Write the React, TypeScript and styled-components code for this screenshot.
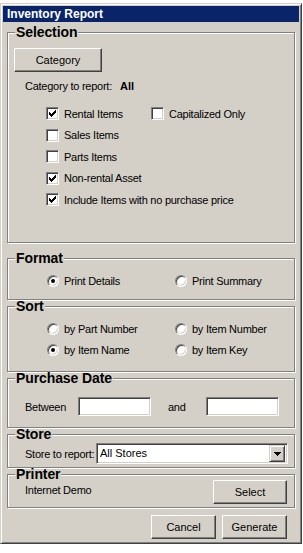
import React from "react";
import styled, { createGlobalStyle } from "styled-components";

const GlobalStyle = createGlobalStyle`
  html, body {
    margin: 0;
    padding: 0;
    background: #ffffff;
  }
  * {
    box-sizing: border-box;
  }
`;

const Window = styled.div`
  width: 302px;
  height: 541px;
  margin-top: 3px;
  border: 1px solid;
  border-color: #d4d0c8 #404040 #404040 #d4d0c8;
  box-shadow: inset 1px 1px #ffffff, inset -1px -1px #808080;
  padding: 2px;
  background: #d4d0c8;
  display: flex;
  flex-direction: column;
  font-family: "Liberation Sans", Arial, sans-serif;
  color: #000000;
`;

const TitleBar = styled.div`
  height: 16px;
  line-height: 16px;
  padding-left: 4px;
  background: #0a246a;
  color: #ffffff;
  font-size: 12px;
  font-weight: bold;
`;

const Body = styled.div`
  padding: 0 4px;
  display: flex;
  flex-direction: column;
`;

interface GroupProps {
  $height: number;
  $top: number;
}
const Group = styled.fieldset<GroupProps>`
  height: ${(p) => p.$height}px;
  margin: ${(p) => p.$top}px 0 0 0;
  padding: 0;
  min-width: 0;
  border: 1px solid #808080;
  box-shadow: inset 1px 1px #ffffff, 1px 1px #ffffff;
`;

const Legend = styled.legend`
  margin-left: 7px;
  padding: 0 1px;
  font-size: 14px;
  font-weight: bold;
  line-height: 10px;
  letter-spacing: -0.1px;
  background: #d4d0c8;
`;

const Label = styled.span`
  font-size: 11px;
  letter-spacing: -0.25px;
  white-space: nowrap;
`;

interface ButtonProps {
  $w: number;
}
const Button = styled.button<ButtonProps>`
  width: ${(p) => p.$w}px;
  height: 24px;
  padding: 0;
  background: #d4d0c8;
  border: 1px solid;
  border-color: #ffffff #404040 #404040 #ffffff;
  box-shadow: inset -1px -1px #808080;
  font-family: "Liberation Sans", Arial, sans-serif;
  font-size: 11px;
  color: #000000;
`;

const CategoryButton = styled(Button)`
  margin: 11px 0 0 6px;
`;

const CategoryLine = styled.div`
  margin: 7px 0 0 17px;
  height: 14px;
  line-height: 14px;
  display: flex;
`;

const CategoryLabel = styled(Label)`
  width: 95px;
`;

const CategoryValue = styled.span`
  font-size: 11px;
  font-weight: bold;
`;

const CheckGrid = styled.div`
  margin-top: 14px;
  padding-left: 38px;
  display: grid;
  grid-template-columns: 105px auto;
  grid-auto-rows: 13px;
  row-gap: 8.5px;
`;

interface OptionProps {
  $wide?: boolean;
}
const Option = styled.div<OptionProps>`
  display: flex;
  align-items: center;
  gap: 5px;
  height: 13px;
  grid-column: ${(p) => (p.$wide ? "1 / span 2" : "auto")};
`;

const CheckBoxBox = styled.span`
  width: 13px;
  height: 13px;
  flex: none;
  background: #ffffff;
  border: 1px solid;
  border-color: #808080 #ffffff #ffffff #808080;
  box-shadow: inset 1px 1px #404040, inset -1px -1px #d4d0c8;
  display: flex;
  align-items: center;
  justify-content: center;
`;

const CheckBox = ({ checked }: { checked?: boolean }) => (
  <CheckBoxBox>
    {checked && (
      <svg width="7" height="7" viewBox="0 0 7 7" shapeRendering="crispEdges">
        <path
          d="M6 0h1v3h-1v1h-1v1h-1v1h-1v1h-1v-1h-1v-1h-1v-3h1v1h1v1h1v-1h1v-1h1z"
          fill="#000000"
        />
      </svg>
    )}
  </CheckBoxBox>
);

const RadioRing = styled.span`
  width: 12px;
  height: 12px;
  flex: none;
  border-radius: 50%;
  background: #ffffff;
  border: 1px solid;
  border-color: #808080 #ffffff #ffffff #808080;
  box-shadow: inset 1px 1px #404040, inset -1px -1px #d4d0c8;
  display: flex;
  align-items: center;
  justify-content: center;
`;

const RadioDot = styled.span`
  width: 4px;
  height: 4px;
  border-radius: 50%;
  background: #000000;
`;

const Radio = ({ checked }: { checked?: boolean }) => (
  <RadioRing>{checked && <RadioDot />}</RadioRing>
);

interface RadioGridProps {
  $top: number;
}
const RadioGrid = styled.div<RadioGridProps>`
  margin-top: ${(p) => p.$top}px;
  padding-left: 39px;
  display: grid;
  grid-template-columns: 128px auto;
  grid-auto-rows: 14px;
  row-gap: 7px;
  align-items: center;
`;

const RadioOption = styled.div`
  display: flex;
  align-items: center;
  gap: 5px;
`;

const DateRow = styled.div`
  margin: 14px 0 0 17px;
  display: flex;
  align-items: center;
`;

interface FieldLabelProps {
  $w: number;
}
const FieldLabel = styled(Label)<FieldLabelProps>`
  display: inline-block;
  width: ${(p) => p.$w}px;
`;

const TextBox = styled.div`
  width: 73px;
  height: 19px;
  background: #ffffff;
  border: 1px solid;
  border-color: #808080 #ffffff #ffffff #808080;
  box-shadow: inset 1px 1px #404040, inset -1px -1px #d4d0c8;
`;

const StoreRow = styled.div`
  margin: 4px 0 0 17px;
  display: flex;
  align-items: center;
`;

const Combo = styled.div`
  width: 192px;
  height: 21px;
  background: #ffffff;
  border: 1px solid;
  border-color: #808080 #ffffff #ffffff #808080;
  box-shadow: inset 1px 1px #404040, inset -1px -1px #d4d0c8;
  padding: 2px;
  display: flex;
  align-items: center;
`;

const ComboText = styled.span`
  flex: 1;
  padding-left: 1px;
  font-size: 11px;
  line-height: 15px;
`;

const ComboArrow = styled.span`
  width: 16px;
  height: 17px;
  flex: none;
  background: #d4d0c8;
  border: 1px solid;
  border-color: #d4d0c8 #404040 #404040 #d4d0c8;
  box-shadow: inset 1px 1px #ffffff, inset -1px -1px #808080;
  display: flex;
  align-items: center;
  justify-content: center;
`;

const PrinterRow = styled.div`
  margin-top: 1px;
  padding: 0 7px 0 17px;
  display: flex;
  align-items: flex-start;
  justify-content: space-between;
`;

const PrinterName = styled(Label)`
  margin-top: 4px;
`;

const Footer = styled.div`
  margin-top: 7px;
  padding-right: 8px;
  display: flex;
  justify-content: flex-end;
  gap: 6px;
`;

export default function App() {
  return (
    <>
      <GlobalStyle />
      <Window>
        <TitleBar>Inventory Report</TitleBar>
        <Body>
          <Group $height={216} $top={5}>
            <Legend>Selection</Legend>
            <CategoryButton $w={88}>Category</CategoryButton>
            <CategoryLine>
              <CategoryLabel>Category to report:</CategoryLabel>
              <CategoryValue>All</CategoryValue>
            </CategoryLine>
            <CheckGrid>
              <Option>
                <CheckBox checked />
                <Label>Rental Items</Label>
              </Option>
              <Option>
                <CheckBox />
                <Label>Capitalized Only</Label>
              </Option>
              <Option $wide>
                <CheckBox />
                <Label>Sales Items</Label>
              </Option>
              <Option $wide>
                <CheckBox />
                <Label>Parts Items</Label>
              </Option>
              <Option $wide>
                <CheckBox checked />
                <Label>Non-rental Asset</Label>
              </Option>
              <Option $wide>
                <CheckBox checked />
                <Label>Include Items with no purchase price</Label>
              </Option>
            </CheckGrid>
          </Group>

          <Group $height={47} $top={10}>
            <Legend>Format</Legend>
            <RadioGrid $top={11}>
              <RadioOption>
                <Radio checked />
                <Label>Print Details</Label>
              </RadioOption>
              <RadioOption>
                <Radio />
                <Label>Print Summary</Label>
              </RadioOption>
            </RadioGrid>
          </Group>

          <Group $height={71} $top={1}>
            <Legend>Sort</Legend>
            <RadioGrid $top={11}>
              <RadioOption>
                <Radio />
                <Label>by Part Number</Label>
              </RadioOption>
              <RadioOption>
                <Radio />
                <Label>by Item Number</Label>
              </RadioOption>
              <RadioOption>
                <Radio checked />
                <Label>by Item Name</Label>
              </RadioOption>
              <RadioOption>
                <Radio />
                <Label>by Item Key</Label>
              </RadioOption>
            </RadioGrid>
          </Group>

          <Group $height={55} $top={1}>
            <Legend>Purchase Date</Legend>
            <DateRow>
              <FieldLabel $w={53}>Between</FieldLabel>
              <TextBox />
              <FieldLabel $w={17} />
              <FieldLabel $w={38}>and</FieldLabel>
              <TextBox />
            </DateRow>
          </Group>

          <Group $height={39} $top={1}>
            <Legend>Store</Legend>
            <StoreRow>
              <FieldLabel $w={71}>Store to report:</FieldLabel>
              <Combo>
                <ComboText>All Stores</ComboText>
                <ComboArrow>
                  <svg width="7" height="4" viewBox="0 0 7 4" shapeRendering="crispEdges">
                    <path d="M0 0h7v1h-1v1h-1v1h-1v1h-1v-1h-1v-1h-1v-1h-1z" fill="#000000" />
                  </svg>
                </ComboArrow>
              </Combo>
            </StoreRow>
          </Group>

          <Group $height={39} $top={1}>
            <Legend>Printer</Legend>
            <PrinterRow>
              <PrinterName>Internet Demo</PrinterName>
              <Button $w={74}>Select</Button>
            </PrinterRow>
          </Group>

          <Footer>
            <Button $w={65}>Cancel</Button>
            <Button $w={65}>Generate</Button>
          </Footer>
        </Body>
      </Window>
    </>
  );
}
